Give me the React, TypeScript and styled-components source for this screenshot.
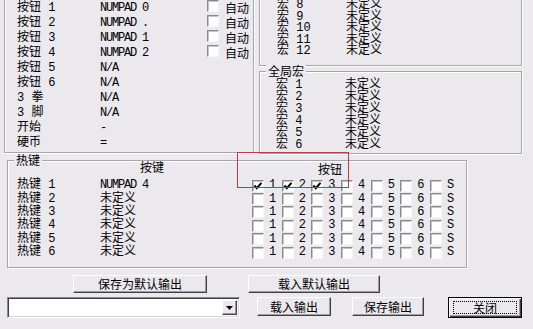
import React from "react";
import styled, { createGlobalStyle, css } from "styled-components";

const FACE = "#ECE9EE";

const GlobalStyle = createGlobalStyle`
  html, body {
    margin: 0;
    padding: 0;
    background: ${FACE};
  }
  body {
    font-family: "Liberation Mono", "Noto Sans CJK SC", monospace;
    font-size: 12px;
    color: #000;
  }
`;

const leftRows: [string, string, boolean][] = [
  ["按钮 1", "NUMPAD 0", true],
  ["按钮 2", "NUMPAD .", true],
  ["按钮 3", "NUMPAD 1", true],
  ["按钮 4", "NUMPAD 2", true],
  ["按钮 5", "N/A", false],
  ["按钮 6", "N/A", false],
  ["3 拳", "N/A", false],
  ["3 脚", "N/A", false],
  ["开始", "-", false],
  ["硬币", "=", false],
];

const macros = [8, 9, 10, 11, 12];
const globalMacros = [1, 2, 3, 4, 5, 6];

const hotkeys = [
  { name: "热键 1", key: "NUMPAD 4", on: [0, 1, 2] },
  { name: "热键 2", key: "未定义", on: [] as number[] },
  { name: "热键 3", key: "未定义", on: [] as number[] },
  { name: "热键 4", key: "未定义", on: [] as number[] },
  { name: "热键 5", key: "未定义", on: [] as number[] },
  { name: "热键 6", key: "未定义", on: [] as number[] },
];
const buttonLabels = ["1", "2", "3", "4", "5", "6", "S"];

const isAscii = (s: string) => /^[ -~]+$/.test(s);

const Window = styled.div`
  position: relative;
  width: 533px;
  height: 329px;
  overflow: hidden;
  background: ${FACE};
`;

const TopRow = styled.div`
  display: flex;
  margin-top: -10px;
  height: 164px;
`;

const Group = styled.div<{ $w: number; $h: number }>`
  position: relative;
  box-sizing: border-box;
  width: ${(p) => p.$w}px;
  height: ${(p) => p.$h}px;
  border: 1px solid #a7a5ab;
  box-shadow: inset 1px 1px 0 #fff, 1px 1px 0 #fff;
`;

const Legend = styled.span`
  position: absolute;
  top: -7px;
  left: 6px;
  padding: 0 2px;
  background: ${FACE};
  font-family: "Noto Sans CJK SC", sans-serif;
  line-height: 12px;
`;

const LeftGroup = styled(Group)`
  margin-left: 4px;
  padding: 10px 0 0 12px;
`;

const LeftGrid = styled.div`
  display: grid;
  grid-template-columns: 83px 107px 18px 1fr;
  grid-auto-rows: 15px;
  align-items: center;
  line-height: 15px;
  white-space: pre;
`;

const RightCol = styled.div`
  display: flex;
  flex-direction: column;
  gap: 5px;
  margin-left: 5px;
`;

const MacroGrid = styled.div<{ $row: number }>`
  display: grid;
  grid-template-columns: 69px 1fr;
  grid-auto-rows: ${(p) => p.$row}px;
  align-items: center;
  line-height: ${(p) => p.$row}px;
  white-space: pre;
`;

const MacroGroup = styled(Group)`
  padding: 9px 0 0 17px;
`;

const GlobalGroup = styled(Group)`
  padding: 7px 0 0 16px;
`;

const KeyText = styled.span<{ $mono?: boolean }>`
  ${(p) =>
    p.$mono &&
    css`
      letter-spacing: -1.2px;
    `}
`;

const Box = styled.span`
  display: inline-flex;
  align-items: center;
  justify-content: center;
  box-sizing: border-box;
  width: 12px;
  height: 12px;
  background: #fff;
  border-style: solid;
  border-width: 1px;
  border-color: #8a898d #f6f6f6 #f6f6f6 #8a898d;
  box-shadow: inset 1px 1px 0 #c4c3c7;
`;

const Check = ({ checked }: { checked?: boolean }) => (
  <Box>
    {checked && (
      <svg width="10" height="10" viewBox="0 0 10 10">
        <polyline
          points="1.5,4.5 3.8,7.2 8.5,1.8"
          fill="none"
          stroke="#000"
          strokeWidth="2"
        />
      </svg>
    )}
  </Box>
);

const Auto = styled.span`
  font-family: "Noto Sans CJK SC", sans-serif;
`;

const HotkeyGroup = styled(Group)`
  margin: 6px 0 0 7px;
  padding: 0 0 0 9px;
`;

const HotGrid = styled.div`
  display: grid;
  grid-template-columns: 83px 152px 1fr;
  grid-template-rows: 18px;
  grid-auto-rows: 13.4px;
  align-items: center;
  line-height: 13px;
  white-space: pre;
`;

const HeadCell = styled.span<{ $pad: number; $drop?: number }>`
  align-self: start;
  padding-left: ${(p) => p.$pad}px;
  margin-top: ${(p) => p.$drop ?? 0}px;
  font-family: "Noto Sans CJK SC", sans-serif;
  line-height: 12px;
`;

const ChecksRow = styled.div`
  display: grid;
  grid-template-columns: repeat(7, 29.67px);
  align-items: center;
`;

const CheckItem = styled.span`
  display: flex;
  align-items: center;
  gap: 5px;
`;

const BtnRow = styled.div<{ $top: number; $left: number }>`
  display: flex;
  align-items: flex-start;
  margin-top: ${(p) => p.$top}px;
  padding-left: ${(p) => p.$left}px;
`;

const Button = styled.button<{ $w: number; $h?: number; $gap?: number; $default?: boolean }>`
  box-sizing: border-box;
  width: ${(p) => p.$w}px;
  height: ${(p) => p.$h ?? 19}px;
  margin: 0 0 0 ${(p) => p.$gap ?? 0}px;
  padding: 0;
  display: flex;
  align-items: center;
  justify-content: center;
  font-family: "Noto Sans CJK SC", sans-serif;
  font-size: 12px;
  line-height: 1;
  color: #000;
  background: ${FACE};
  border: 1px solid;
  border-color: #fff #404040 #404040 #fff;
  box-shadow: inset -1px -1px 0 #9d9ca0;
  ${(p) =>
    p.$default &&
    css`
      padding: 3px 4px;
      border-color: #000;
      box-shadow: inset 1px 1px 0 #fff, inset -1px -1px 0 #404040,
        inset -2px -2px 0 #9d9ca0;
    `}
`;

const FocusRing = styled.span`
  flex: 1;
  align-self: stretch;
  display: flex;
  align-items: center;
  justify-content: center;
  border: 1px dotted #000;
`;

const Combo = styled.div`
  box-sizing: border-box;
  width: 233px;
  height: 21px;
  display: flex;
  justify-content: flex-end;
  padding: 2px;
  background: #fff;
  border: 1px solid;
  border-color: #8a898d #fff #fff #8a898d;
  box-shadow: inset 1px 1px 0 #404040, inset -1px -1px 0 #d8d6da;
`;

const ComboArrow = styled.span`
  box-sizing: border-box;
  width: 15px;
  height: 100%;
  display: flex;
  align-items: center;
  justify-content: center;
  background: ${FACE};
  border: 1px solid;
  border-color: #fff #404040 #404040 #fff;
  box-shadow: inset -1px -1px 0 #9d9ca0;
`;

const Marker = styled.div`
  position: absolute;
  left: 237px;
  top: 152px;
  width: 112px;
  height: 36px;
  box-sizing: border-box;
  border: 1px solid #bf3a3f;
  pointer-events: none;
`;

export default function App() {
  return (
    <>
      <GlobalStyle />
      <Window>
        <TopRow>
          <LeftGroup $w={250} $h={163}>
            <LeftGrid>
              {leftRows.map(([label, key, auto]) => (
                <React.Fragment key={label}>
                  <span>{label}</span>
                  <KeyText $mono={isAscii(key)}>{key}</KeyText>
                  <span>{auto && <Check />}</span>
                  <span>{auto && <Auto>自动</Auto>}</span>
                </React.Fragment>
              ))}
            </LeftGrid>
          </LeftGroup>
          <RightCol>
            <MacroGroup $w={263} $h={76}>
              <MacroGrid $row={11.6}>
                {macros.map((n) => (
                  <React.Fragment key={n}>
                    <span>{`宏 ${n}`}</span>
                    <span>未定义</span>
                  </React.Fragment>
                ))}
              </MacroGrid>
            </MacroGroup>
            <GlobalGroup $w={263} $h={83}>
              <Legend>全局宏</Legend>
              <MacroGrid $row={12}>
                {globalMacros.map((n) => (
                  <React.Fragment key={n}>
                    <span>{`宏 ${n}`}</span>
                    <span>未定义</span>
                  </React.Fragment>
                ))}
              </MacroGrid>
            </GlobalGroup>
          </RightCol>
        </TopRow>

        <HotkeyGroup $w={460} $h={108}>
          <Legend>热键</Legend>
          <HotGrid>
            <span />
            <HeadCell $pad={40}>按键</HeadCell>
            <HeadCell $pad={66} $drop={2}>
              按钮
            </HeadCell>
            {hotkeys.map((h) => (
              <React.Fragment key={h.name}>
                <span>{h.name}</span>
                <KeyText $mono={isAscii(h.key)}>{h.key}</KeyText>
                <ChecksRow>
                  {buttonLabels.map((b, i) => (
                    <CheckItem key={b}>
                      <Check checked={h.on.includes(i)} />
                      <span>{b}</span>
                    </CheckItem>
                  ))}
                </ChecksRow>
              </React.Fragment>
            ))}
          </HotGrid>
        </HotkeyGroup>

        <BtnRow $top={7} $left={73}>
          <Button $w={134} $h={18}>
            保存为默认输出
          </Button>
          <Button $w={132} $h={18} $gap={41}>
            载入默认输出
          </Button>
        </BtnRow>
        <BtnRow $top={4} $left={7}>
          <Combo>
            <ComboArrow>
              <svg width="7" height="4" viewBox="0 0 7 4">
                <polygon points="0,0 7,0 3.5,4" fill="#000" />
              </svg>
            </ComboArrow>
          </Combo>
          <Button $w={74} $gap={17}>
            载入输出
          </Button>
          <Button $w={72} $gap={21}>
            保存输出
          </Button>
          <Button $w={74} $h={21} $gap={24} $default>
            <FocusRing>关闭</FocusRing>
          </Button>
        </BtnRow>

        <Marker />
      </Window>
    </>
  );
}
